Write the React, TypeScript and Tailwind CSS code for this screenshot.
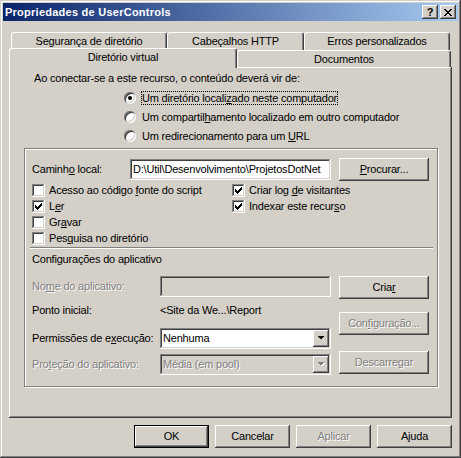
import React from "react";

const raised =
  "shadow-[inset_-1px_-1px_#404040,inset_1px_1px_#ffffff,inset_-2px_-2px_#808080,inset_2px_2px_#d4d0c8]";
const sunken =
  "shadow-[inset_-1px_-1px_#ffffff,inset_1px_1px_#808080,inset_-2px_-2px_#d4d0c8,inset_2px_2px_#404040]";
const grayText = "text-[#808080] [text-shadow:1px_1px_0_#ffffff]";

const CHECK = ["......#", ".....##", "#...###", "##.###.", "#####..", ".###...", "..#...."];
const CLOSE = ["##....##", ".##..##.", "..####..", "...##...", "..####..", ".##..##.", "##....##"];

function Bitmap({ rows, color }: { rows: string[]; color: string }) {
  const w = rows[0].length;
  const h = rows.length;
  return (
    <svg width={w} height={h} viewBox={`0 0 ${w} ${h}`} shapeRendering="crispEdges">
      {rows.flatMap((r, y) =>
        r.split("").map((c, x) => (c === "#" ? <rect key={`${x}-${y}`} x={x} y={y} width={1} height={1} fill={color} /> : null))
      )}
    </svg>
  );
}

function Arrow({ disabled }: { disabled?: boolean }) {
  return (
    <svg width="8" height="5" viewBox="0 0 8 5" shapeRendering="crispEdges">
      {disabled && <polygon points="1,1 8,1 4.5,4.5" fill="#ffffff" />}
      <polygon points="0,0 7,0 3.5,3.5" fill={disabled ? "#808080" : "#000000"} />
    </svg>
  );
}

function Btn({
  children,
  className = "",
  disabled,
  isDefault,
}: {
  children: React.ReactNode;
  className?: string;
  disabled?: boolean;
  isDefault?: boolean;
}) {
  return (
    <div
      className={`h-[23px] flex items-center justify-center bg-[#d4d0c8] shrink-0 ${
        isDefault
          ? "border border-black shadow-[inset_-1px_-1px_#404040,inset_1px_1px_#ffffff,inset_-2px_-2px_#808080]"
          : raised
      } ${disabled ? grayText : ""} ${className}`}
    >
      <span>{children}</span>
    </div>
  );
}

function Check({ checked }: { checked?: boolean }) {
  return (
    <span className={`w-[13px] h-[13px] bg-white flex items-center justify-center shrink-0 ${sunken}`}>
      {checked && <Bitmap rows={CHECK} color="#000000" />}
    </span>
  );
}

function Radio({ checked }: { checked?: boolean }) {
  return (
    <span
      className="w-[12px] h-[12px] rounded-full bg-white flex items-center justify-center shrink-0 shadow-[inset_1px_1px_#808080,inset_-1px_-1px_#ffffff,inset_2px_2px_#404040,inset_-2px_-2px_#d4d0c8]"
    >
      {checked && <span className="w-[4px] h-[4px] rounded-full bg-black" />}
    </span>
  );
}

function Select({ value, disabled }: { value: string; disabled?: boolean }) {
  return (
    <div className={`w-[171px] h-[21px] flex p-[2px] ${disabled ? "bg-[#d4d0c8]" : "bg-white"} ${sunken}`}>
      <span className={`flex-1 flex items-center pl-[1px] ${disabled ? grayText : ""}`}>{value}</span>
      <span className={`w-[16px] h-[17px] bg-[#d4d0c8] flex items-center justify-center ${raised}`}>
        <Arrow disabled={disabled} />
      </span>
    </div>
  );
}

function Tab({ label, className = "" }: { label: string; className?: string }) {
  return (
    <div
      className={`flex items-center justify-center bg-[#d4d0c8] border-l border-t border-r border-l-white border-t-white border-r-[#404040] rounded-t-[3px] shadow-[inset_-1px_0_#808080] ${className}`}
    >
      {label}
    </div>
  );
}

function CheckRow({ checked, children }: { checked?: boolean; children: React.ReactNode }) {
  return (
    <div className="h-[16px] flex items-center gap-[4px]">
      <Check checked={checked} />
      <span>{children}</span>
    </div>
  );
}

export default function App() {
  return (
    <div className="w-[461px] h-[458px] bg-[#d4d0c8] p-[3px] overflow-hidden select-none text-black text-[11px] leading-[13px] tracking-[-0.2px] font-['Liberation_Sans',Arial,sans-serif] shadow-[inset_-1px_-1px_#404040,inset_1px_1px_#d4d0c8,inset_-2px_-2px_#808080,inset_2px_2px_#ffffff]">
      {/* caption */}
      <div className="h-[18px] flex items-center pl-[2px] pr-[2px] bg-[linear-gradient(to_right,#0a246a,#a6caf0)]">
        <span className="font-bold text-white tracking-[0.25px]">Propriedades de UserControls</span>
        <div className="ml-auto flex gap-[2px]">
          <div className={`w-[16px] h-[14px] bg-[#d4d0c8] flex items-center justify-center font-bold ${raised}`}>?</div>
          <div className={`w-[16px] h-[14px] bg-[#d4d0c8] flex items-center justify-center ${raised}`}>
            <Bitmap rows={CLOSE} color="#000000" />
          </div>
        </div>
      </div>

      <div className="pl-[6px] pr-[6px] pt-[11px]">
        {/* tab rows */}
        <div className="h-[18px] flex pl-[2px]">
          <Tab label="Segurança de diretório" className="w-[156px] h-[18px]" />
          <Tab label="Cabeçalhos HTTP" className="w-[137px] h-[18px]" />
          <Tab label="Erros personalizados" className="w-[146px] h-[18px]" />
        </div>
        <div className="h-[17px] flex items-start">
          <Tab label="Diretório virtual" className="relative z-10 w-[228px] h-[20px] -mt-[2px] pb-[2px]" />
          <Tab label="Documentos" className="w-[214px] h-[17px]" />
        </div>

        {/* page */}
        <div className="h-[351px] pt-[5px] shadow-[inset_-1px_-1px_#404040,inset_1px_1px_#ffffff,inset_-2px_-2px_#808080]">
          <div className="pl-[25px] h-[13px]">Ao conectar-se a este recurso, o conteúdo deverá vir de:</div>
          <div className="mt-[3px] pl-[115px] flex flex-col">
            <div className="h-[19px] flex items-center">
              <Radio checked />
              <span className="ml-[5px] border border-dotted border-black leading-[12px]">
                Um diretório locali<u>z</u>ado neste computador
              </span>
            </div>
            <div className="h-[19px] flex items-center">
              <Radio />
              <span className="ml-[5px] border border-transparent leading-[12px]">
                Um compartil<u>h</u>amento localizado em outro computador
              </span>
            </div>
            <div className="h-[19px] flex items-center">
              <Radio />
              <span className="ml-[5px] border border-transparent leading-[12px]">
                Um redirecionamento para um <u>U</u>RL
              </span>
            </div>
          </div>

          {/* frame */}
          <div className="mt-[3px] ml-[15px] w-[414px] h-[239px] border border-[#808080] shadow-[inset_1px_1px_#ffffff,1px_1px_#ffffff]">
            <div className="mt-[9px] h-[23px] flex items-center pl-[7px]">
              <span className="w-[98px]">
                Caminh<u>o</u> local:
              </span>
              <div className={`w-[201px] h-[21px] bg-white flex items-center pl-[3px] pr-[2px] overflow-hidden whitespace-nowrap ${sunken}`}>
                D:\Util\Desenvolvimento\ProjetosDotNet
              </div>
              <Btn className="ml-[8px] w-[90px]">
                <u>P</u>rocurar...
              </Btn>
            </div>

            <div className="mt-[1px] pl-[7px] grid grid-cols-[200px_1fr]">
              <CheckRow>
                Acesso ao código <u>f</u>onte do script
              </CheckRow>
              <CheckRow checked>
                Criar log <u>d</u>e visitantes
              </CheckRow>
              <CheckRow checked>
                L<u>e</u>r
              </CheckRow>
              <CheckRow checked>
                Indexar este recur<u>s</u>o
              </CheckRow>
              <CheckRow>
                Gr<u>a</u>var
              </CheckRow>
              <div />
              <CheckRow>
                Pes<u>q</u>uisa no diretório
              </CheckRow>
              <div />
            </div>

            <div className="mt-[1px] ml-[5px] mr-[4px] h-[2px] border-t border-b border-t-[#808080] border-b-white" />

            <div className="mt-[4px] pl-[7px] h-[13px]">Configurações do aplicativo</div>

            <div className="mt-[10px] pl-[7px] flex">
              <div className="flex flex-col">
                <div className="h-[21px] flex items-center">
                  <span className={`w-[128px] ${grayText}`}>
                    No<u>m</u>e do aplicativo:
                  </span>
                  <div className={`w-[171px] h-[21px] bg-[#d4d0c8] ${sunken}`} />
                </div>
                <div className="mt-[7px] h-[13px] flex items-center">
                  <span className="w-[128px]">Ponto inicial:</span>
                  <span>{"<Site da We...\\Report"}</span>
                </div>
                <div className="mt-[11px] h-[21px] flex items-center">
                  <span className="w-[128px]">
                    Permissões de e<u>x</u>ecução:
                  </span>
                  <Select value="Nenhuma" />
                </div>
                <div className="mt-[5px] h-[21px] flex items-center">
                  <span className={`w-[128px] ${grayText}`}>
                    Pro<u>t</u>eção do aplicativo:
                  </span>
                  <Select value="Média (em pool)" disabled />
                </div>
              </div>
              <div className="ml-[8px] flex flex-col">
                <Btn className="w-[90px]">
                  Cria<u>r</u>
                </Btn>
                <Btn className="mt-[13px] w-[90px]" disabled>
                  Con<u>f</u>iguração...
                </Btn>
                <Btn className="mt-[16px] w-[90px]" disabled>
                  Descarre<u>g</u>ar
                </Btn>
              </div>
            </div>
          </div>
        </div>

        {/* dialog buttons */}
        <div className="mt-[7px] flex justify-end gap-[6px]">
          <Btn className="w-[75px]" isDefault>
            OK
          </Btn>
          <Btn className="w-[75px]">Cancelar</Btn>
          <Btn className="w-[75px]" disabled>
            Aplicar
          </Btn>
          <Btn className="w-[75px]">Ajuda</Btn>
        </div>
      </div>
    </div>
  );
}
